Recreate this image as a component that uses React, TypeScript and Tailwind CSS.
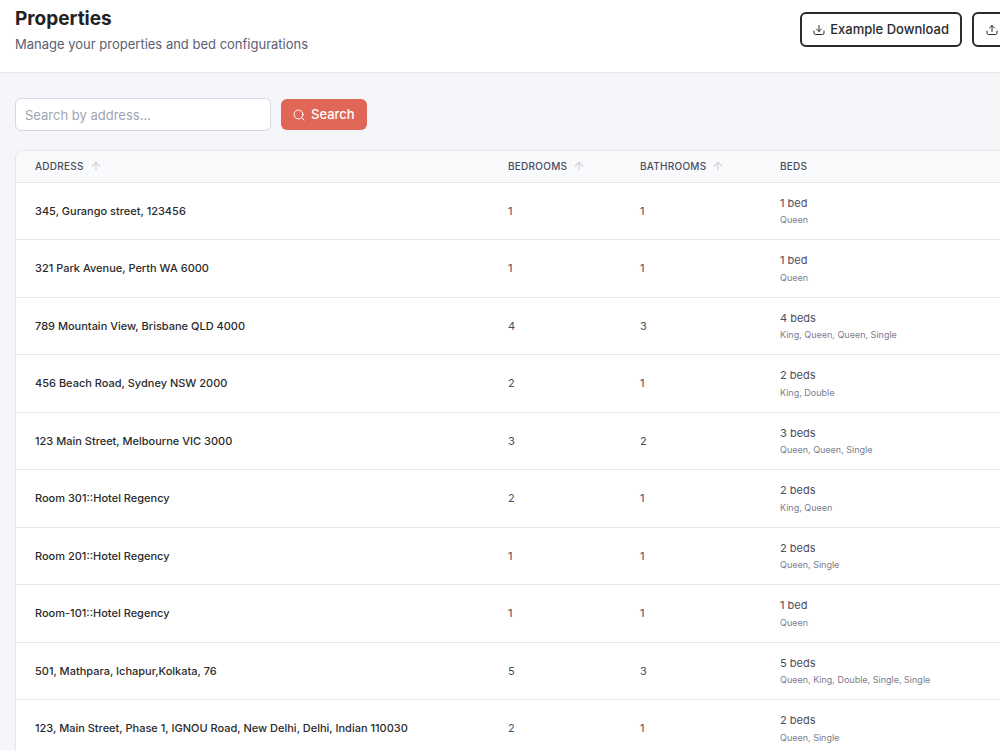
import { ReactNode } from 'react'

interface IProperty {
  address: string
  bedrooms: number
  bathrooms: number
  beds: string[]
}

const properties: IProperty[] = [
  { address: '345, Gurango street, 123456', bedrooms: 1, bathrooms: 1, beds: ['Queen'] },
  { address: '321 Park Avenue, Perth WA 6000', bedrooms: 1, bathrooms: 1, beds: ['Queen'] },
  { address: '789 Mountain View, Brisbane QLD 4000', bedrooms: 4, bathrooms: 3, beds: ['King', 'Queen', 'Queen', 'Single'] },
  { address: '456 Beach Road, Sydney NSW 2000', bedrooms: 2, bathrooms: 1, beds: ['King', 'Double'] },
  { address: '123 Main Street, Melbourne VIC 3000', bedrooms: 3, bathrooms: 2, beds: ['Queen', 'Queen', 'Single'] },
  { address: 'Room 301::Hotel Regency', bedrooms: 2, bathrooms: 1, beds: ['King', 'Queen'] },
  { address: 'Room 201::Hotel Regency', bedrooms: 1, bathrooms: 1, beds: ['Queen', 'Single'] },
  { address: 'Room-101::Hotel Regency', bedrooms: 1, bathrooms: 1, beds: ['Queen'] },
  { address: '501, Mathpara, Ichapur,Kolkata, 76', bedrooms: 5, bathrooms: 3, beds: ['Queen', 'King', 'Double', 'Single', 'Single'] },
  { address: '123, Main Street, Phase 1, IGNOU Road, New Delhi, Delhi, Indian 110030', bedrooms: 2, bathrooms: 1, beds: ['Queen', 'Single'] },
]

interface IconProps {
  className: string
  children: ReactNode
}

const Icon = ({ className, children }: IconProps) => (
  <svg
    className={className}
    viewBox="0 0 24 24"
    fill="none"
    stroke="currentColor"
    strokeWidth={2}
    strokeLinecap="round"
    strokeLinejoin="round"
    aria-hidden="true"
  >
    {children}
  </svg>
)

interface ColumnHeaderProps {
  label: string
  sortable?: boolean
}

const ColumnHeader = ({ label, sortable }: ColumnHeaderProps) => (
  <th scope="col" className="h-[31px] px-[19px] text-left text-[10px] font-medium tracking-wide text-[#4a4d5e] uppercase">
    {sortable ? (
      <button className="flex items-center gap-[7px] tracking-wide uppercase">
        {label}
        <Icon className="size-[10px] text-[#d3d5db]">
          <path d="M12 21V3M3 12l9-9 9 9" strokeWidth={3} />
        </Icon>
      </button>
    ) : (
      label
    )}
  </th>
)

const PropertyRow = ({ property }: { property: IProperty }) => {
  const { address, bedrooms, bathrooms, beds } = property

  return (
    <tr className="border-b border-[#e6e7eb] text-[11px] text-[#4a4d5e]">
      <td className="px-[19px] font-medium text-[#2b2b2b]">{address}</td>
      <td className="px-[19px]">{bedrooms}</td>
      <td className="px-[19px]">{bathrooms}</td>
      <td className="px-[19px] pt-3 pb-[11px]">
        <div className="leading-normal">
          {beds.length} {beds.length === 1 ? 'bed' : 'beds'}
        </div>
        <div className="mt-px text-[9px] leading-4 text-[#7b7e8c]">{beds.join(', ')}</div>
      </td>
    </tr>
  )
}

const App = () => {
  return (
    <div className="h-screen overflow-hidden bg-[#f4f6f9] font-['Inter',sans-serif]">
      <header className="flex items-start justify-between border-b border-[#e6e7eb] bg-white pt-[7px] pb-5 pl-[15px]">
        <div>
          <h1 className="text-[19px] leading-6 font-bold text-[#222222]">Properties</h1>
          <p className="mt-[5px] text-[13px] leading-4 text-[#5a6072]">Manage your properties and bed configurations</p>
        </div>
        <div className="-mr-20 flex shrink-0 gap-[10px] pt-[5px]">
          <button className="flex h-[35px] items-center gap-[5px] rounded-md border-2 border-[#2b2b2b] px-[11px] text-[13px] font-medium text-[#2b2b2b]">
            <Icon className="size-3">
              <path d="M12 3v12M7 10l5 5 5-5M2 14v4a3 3 0 0 0 3 3h14a3 3 0 0 0 3-3v-4" />
            </Icon>
            Example Download
          </button>
          <button
            aria-label="Upload"
            className="flex h-[35px] w-[108px] items-center rounded-md border-2 border-[#2b2b2b] px-3 text-[#2b2b2b]"
          >
            <Icon className="size-3">
              <path d="M12 15V3M7 8l5-5 5 5M2 14v4a3 3 0 0 0 3 3h14a3 3 0 0 0 3-3v-4" />
            </Icon>
          </button>
        </div>
      </header>

      <main className="pt-[25px] pl-[15px]">
        <form className="flex items-center gap-[10px]" onSubmit={(e) => e.preventDefault()}>
          <input
            type="text"
            aria-label="Search by address"
            placeholder="Search by address..."
            className="h-[33px] w-64 rounded-md border border-[#d5d8e0] bg-white px-[9px] text-[13px] placeholder:text-[#a0a5b2]"
          />
          <button className="flex h-[31px] items-center gap-[6px] rounded-md bg-[#e06757] px-3 text-[13px] font-medium text-white">
            <Icon className="size-3">
              <circle cx="11" cy="11" r="9" />
              <path d="m22 22-4.500-4.500" />
            </Icon>
            Search
          </button>
        </form>

        <div className="mt-[19px] -mr-20 overflow-hidden rounded-lg border border-[#e6e7eb] bg-white shadow-xs">
          <table className="w-full table-fixed border-collapse">
            <colgroup>
              <col className="w-[473px]" />
              <col className="w-[132px]" />
              <col className="w-[140px]" />
              <col />
            </colgroup>
            <thead className="border-b border-[#e6e7eb] bg-[#f9fafc]">
              <tr>
                <ColumnHeader label="Address" sortable />
                <ColumnHeader label="Bedrooms" sortable />
                <ColumnHeader label="Bathrooms" sortable />
                <ColumnHeader label="Beds" />
              </tr>
            </thead>
            <tbody>
              {properties.map((property) => (
                <PropertyRow key={property.address} property={property} />
              ))}
            </tbody>
          </table>
        </div>
      </main>
    </div>
  )
}

export default App
